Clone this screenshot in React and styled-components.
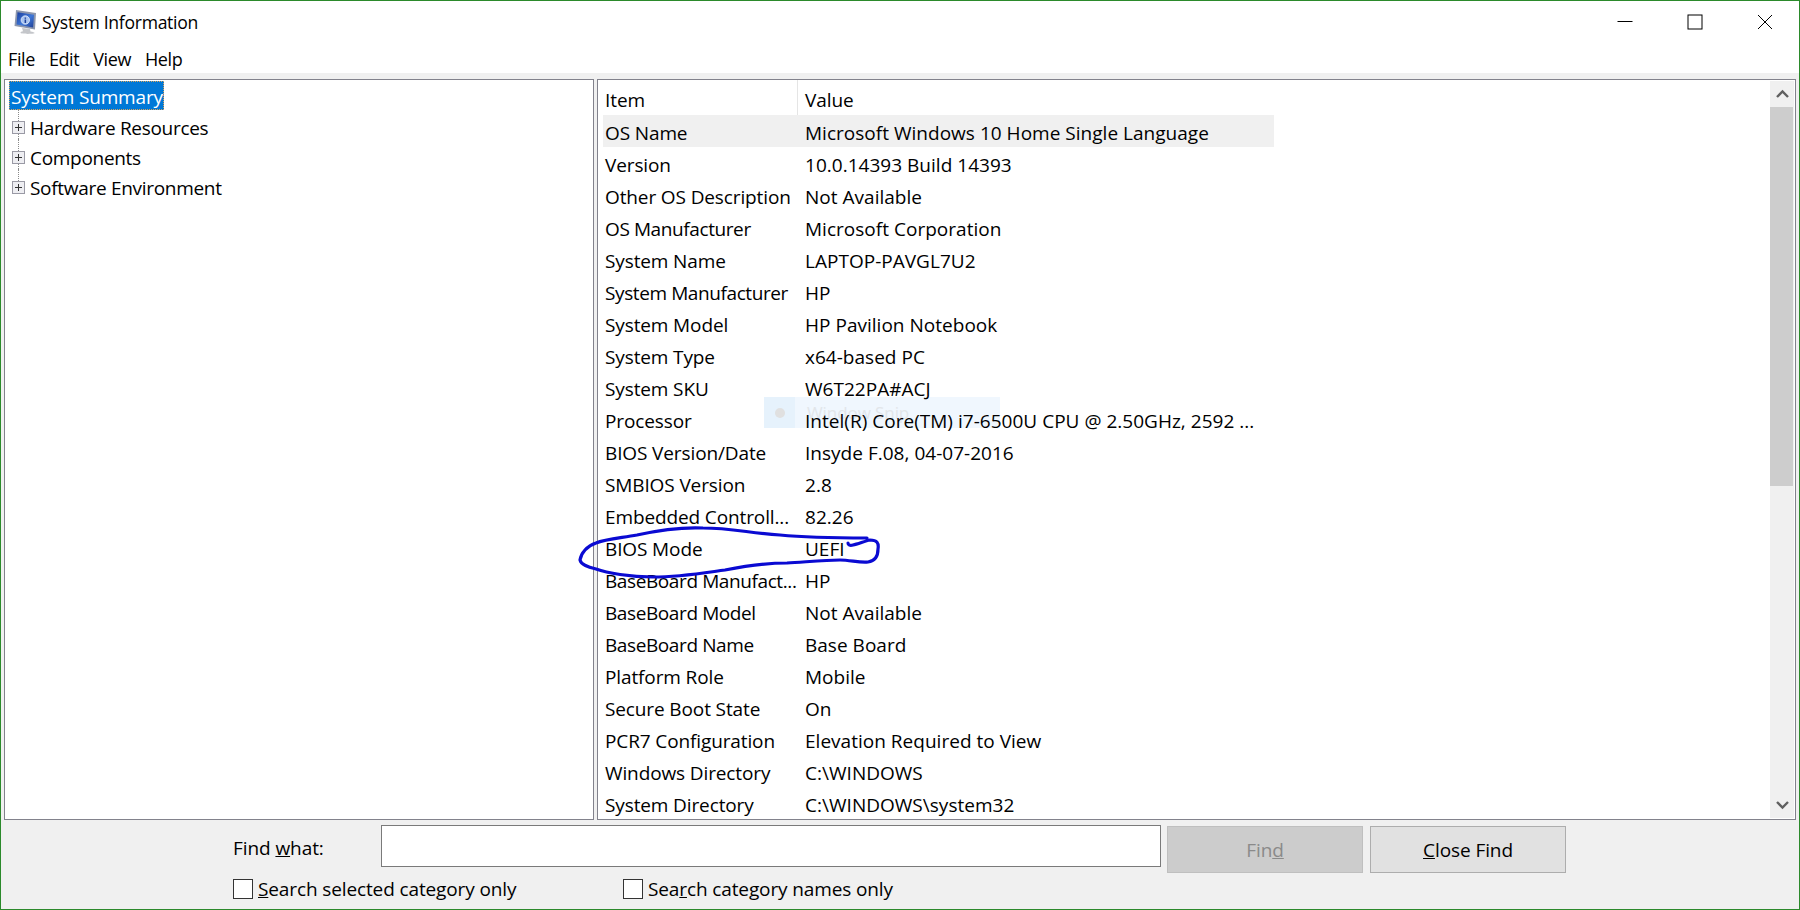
import React from 'react';
import styled, { createGlobalStyle } from 'styled-components';

const GlobalStyle = createGlobalStyle`
  html, body {
    margin: 0;
    padding: 0;
    background: #fff;
  }
  body {
    font-family: "Open Sans", "Noto Sans", sans-serif;
    color: #000;
  }
`;

const summary = [
  ['OS Name', 'Microsoft Windows 10 Home Single Language'],
  ['Version', '10.0.14393 Build 14393'],
  ['Other OS Description', 'Not Available'],
  ['OS Manufacturer', 'Microsoft Corporation'],
  ['System Name', 'LAPTOP-PAVGL7U2'],
  ['System Manufacturer', 'HP'],
  ['System Model', 'HP Pavilion Notebook'],
  ['System Type', 'x64-based PC'],
  ['System SKU', 'W6T22PA#ACJ'],
  ['Processor', 'Intel(R) Core(TM) i7-6500U CPU @ 2.50GHz, 2592 ...'],
  ['BIOS Version/Date', 'Insyde F.08, 04-07-2016'],
  ['SMBIOS Version', '2.8'],
  ['Embedded Controll...', '82.26'],
  ['BIOS Mode', 'UEFI'],
  ['BaseBoard Manufact...', 'HP'],
  ['BaseBoard Model', 'Not Available'],
  ['BaseBoard Name', 'Base Board'],
  ['Platform Role', 'Mobile'],
  ['Secure Boot State', 'On'],
  ['PCR7 Configuration', 'Elevation Required to View'],
  ['Windows Directory', 'C:\\WINDOWS'],
  ['System Directory', 'C:\\WINDOWS\\system32'],
];

const Window = styled.div`
  position: relative;
  box-sizing: border-box;
  width: 1800px;
  height: 910px;
  border: 1px solid #2b8a2b;
  background: #f0f0f0;
  display: flex;
  flex-direction: column;
  overflow: hidden;
  font-size: 19px;
  letter-spacing: -0.08px;
`;

const TitleBar = styled.div`
  height: 39px;
  flex: none;
  box-sizing: border-box;
  padding: 3px 0 0 12px;
  background: #fff;
  display: flex;
  align-items: center;
  gap: 5px;
`;

const TitleText = styled.span`
  font-size: 17.6px;
  letter-spacing: -0.3px;
  flex: 1;
`;

const WinButtons = styled.div`
  display: flex;
  gap: 54px;
  align-items: center;
  padding-right: 26px;
`;

const MenuBar = styled.div`
  height: 33px;
  flex: none;
  box-sizing: border-box;
  padding: 5px 0 0 7px;
  background: #fff;
  display: flex;
  align-items: center;
  gap: 14px;
  font-size: 18px;
  letter-spacing: -0.4px;
`;

const Panes = styled.div`
  height: 741px;
  flex: none;
  margin-top: 6px;
  padding: 0 3px;
  display: flex;
  gap: 3px;
`;

const TreePane = styled.div`
  width: 590px;
  flex: none;
  box-sizing: border-box;
  border: 1px solid #82828c;
  background: #fff;
  padding: 1px 4px;
`;

const TreeRow = styled.div`
  position: relative;
  height: 30px;
  display: flex;
  align-items: center;
  padding-left: 21px;
  letter-spacing: -0.3px;
  &::before {
    content: '';
    position: absolute;
    left: 9px;
    top: -4px;
    height: 34px;
    border-left: 1px dotted #8a8a8a;
  }
  &:last-child::before {
    height: 14px;
  }
`;

const SelectedRow = styled.div`
  display: inline-flex;
  align-items: center;
  height: 29px;
  box-sizing: border-box;
  padding: 2px 1px 0 2px;
  background: #0078d7;
  color: #fff;
  outline: 1px dotted #d9a35a;
  outline-offset: -1px;
  margin-bottom: 3px;
  letter-spacing: -0.15px;
`;

const Expander = styled.span`
  position: absolute;
  left: 3px;
  top: 8px;
  width: 13px;
  height: 13px;
  box-sizing: border-box;
  border: 1px solid #9a9aa5;
  background: #eeeef2;
  &::before,
  &::after {
    content: '';
    position: absolute;
    background: #333;
  }
  &::before {
    left: 2px;
    right: 2px;
    top: 5px;
    height: 1px;
  }
  &::after {
    top: 2px;
    bottom: 2px;
    left: 5px;
    width: 1px;
  }
`;

const ListPane = styled.div`
  position: relative;
  flex: 1;
  display: flex;
  box-sizing: border-box;
  border: 1px solid #82828c;
  background: #fff;
  overflow: hidden;
`;

const Table = styled.div`
  flex: 1;
  padding-left: 5px;
  overflow: hidden;
`;

const HeaderRow = styled.div`
  width: 671px;
  height: 35px;
  display: flex;
  align-items: center;
`;

const HeaderCell = styled.div`
  height: 100%;
  display: flex;
  align-items: center;
  box-sizing: border-box;
  width: ${(p) => p.$w}px;
  padding: 4px 0 0 ${(p) => p.$pad}px;
  border-right: ${(p) => (p.$divider ? '1px solid #e5e5e5' : 'none')};
`;

const Row = styled.div`
  position: relative;
  z-index: 1;
  width: 671px;
  height: 32px;
  box-sizing: border-box;
  padding-top: 4px;
  display: flex;
  align-items: center;
  white-space: nowrap;
  background: ${(p) => (p.$active ? '#f0f0f0' : 'transparent')};
`;

const ItemCell = styled.span`
  width: 200px;
  padding-left: 2px;
  box-sizing: border-box;
  flex: none;
  letter-spacing: ${(p) => (p.$tight ? '-0.4px' : '-0.12px')};
`;

const ValueCell = styled.span`
  padding-left: 2px;
  letter-spacing: 0.02px;
`;

const SnipToast = styled.div`
  position: absolute;
  left: 166px;
  top: 317px;
  width: 236px;
  height: 31px;
  display: flex;
  background: #f0f7fe;
  color: #e2e6ea;
  align-items: center;
  font-size: 17px;
`;

const SnipIcon = styled.span`
  width: 31px;
  height: 100%;
  background: #e6f2fc;
  display: flex;
  align-items: center;
  justify-content: center;
  margin-right: 12px;
  &::before {
    content: '';
    width: 10px;
    height: 10px;
    border-radius: 50%;
    background: #e0e0e0;
  }
`;

const Scrollbar = styled.div`
  width: 24px;
  flex: none;
  margin: 1px 1px 1px 0;
  background: #f0f0f0;
  display: flex;
  flex-direction: column;
`;

const ScrollButton = styled.div`
  height: 26px;
  display: flex;
  align-items: center;
  justify-content: center;
`;

const Thumb = styled.div`
  height: 379px;
  margin-right: 1px;
  background: #cdcdcd;
`;

const ScrollTrack = styled.div`
  flex: 1;
`;

const FindBar = styled.div`
  flex: 1;
  padding: 5px 0 0 232px;
  display: grid;
  grid-template-columns: 148px 780px 6px 196px 7px 196px;
  grid-template-rows: 42px auto;
  align-items: start;
`;

const FindLabel = styled.label`
  align-self: center;
  padding-top: 3px;
`;

const FindInput = styled.div`
  height: 42px;
  box-sizing: border-box;
  border: 1px solid #7a7a7a;
  background: #fff;
`;

const FindButton = styled.div`
  grid-column: ${(p) => p.$col};
  height: 47px;
  margin-top: 1px;
  box-sizing: border-box;
  border: 1px solid ${(p) => (p.$disabled ? '#bfbfbf' : '#adadad')};
  background: ${(p) => (p.$disabled ? '#cccccc' : '#e1e1e1')};
  color: ${(p) => (p.$disabled ? '#8a8a8a' : '#000')};
  display: flex;
  align-items: center;
  justify-content: center;
`;

const Options = styled.div`
  grid-column: 1 / -1;
  margin-top: 9px;
  display: flex;
  align-items: center;
`;

const CheckOption = styled.label`
  display: flex;
  align-items: center;
  gap: 5px;
  width: 390px;
  letter-spacing: -0.12px;
`;

const CheckBox = styled.span`
  width: 20px;
  height: 20px;
  box-sizing: border-box;
  border: 1px solid #333;
  background: #fff;
`;

const Scribble = styled.svg`
  position: absolute;
  left: -1px;
  top: -1px;
  z-index: 2;
  pointer-events: none;
`;

const AppIcon = () => (
  <svg width="24" height="26" viewBox="0 0 24 26">
    <defs>
      <linearGradient id="screen" x1="0" y1="0" x2="1" y2="1">
        <stop offset="0" stopColor="#1c3f9e" />
        <stop offset="0.55" stopColor="#3f78d8" />
        <stop offset="1" stopColor="#1f3f96" />
      </linearGradient>
    </defs>
    <path d="M9 19l8 1 .5 2.500c2.500.3 4 1 4 1.500 0 1.200-14 1.200-14-.2 0-.8 1-1.300 2.500-1.500z" fill="#c4c6ca" />
    <path d="M3 1l20 3-1 16.500L1.500 17z" fill="#8d97ad" />
    <path d="M4.500 3.200L21 5.700l-.9 12.800L3.500 15.600z" fill="url(#screen)" />
    <circle cx="12.300" cy="11" r="4.200" fill="#a9c4ef" stroke="#e4edfb" strokeWidth="0.800" />
    <path d="M11.600 8.400h1.500v1.300h-1.500zM11.600 10.500h1.500v3.500h-1.500z" fill="#1d3f9a" />
  </svg>
);

const MinimizeIcon = () => (
  <svg width="16" height="16" viewBox="0 0 16 16">
    <path d="M0.500 7.500h15" stroke="#000" fill="none" />
  </svg>
);

const MaximizeIcon = () => (
  <svg width="16" height="16" viewBox="0 0 16 16">
    <rect x="1" y="1" width="14" height="14" stroke="#000" fill="none" />
  </svg>
);

const CloseIcon = () => (
  <svg width="16" height="16" viewBox="0 0 16 16">
    <path d="M1 1l14 14M15 1L1 15" stroke="#000" fill="none" />
  </svg>
);

const Chevron = ({ down }) => (
  <svg width="13" height="10" viewBox="0 0 13 10">
    <path
      d={down ? 'M1 2l5.500 5.500L12 2' : 'M1 8l5.500-5.500L12 8'}
      stroke="#606060"
      strokeWidth="2.400"
      fill="none"
    />
  </svg>
);

const App = () => (
  <>
    <GlobalStyle />
    <Window>
      <TitleBar>
        <AppIcon />
        <TitleText>System Information</TitleText>
        <WinButtons>
          <MinimizeIcon />
          <MaximizeIcon />
          <CloseIcon />
        </WinButtons>
      </TitleBar>
      <MenuBar>
        <span>File</span>
        <span>Edit</span>
        <span>View</span>
        <span>Help</span>
      </MenuBar>
      <Panes>
        <TreePane>
          <SelectedRow>System Summary</SelectedRow>
          <TreeRow>
            <Expander />
            Hardware Resources
          </TreeRow>
          <TreeRow>
            <Expander />
            Components
          </TreeRow>
          <TreeRow>
            <Expander />
            Software Environment
          </TreeRow>
        </TreePane>
        <ListPane>
          <Table>
            <HeaderRow>
              <HeaderCell $w={195} $pad={2} $divider>
                Item
              </HeaderCell>
              <HeaderCell $w={476} $pad={7}>
                Value
              </HeaderCell>
            </HeaderRow>
            {summary.map(([item, value], i) => (
              <Row key={item} $active={i === 0}>
                <ItemCell $tight={/Manufact|BaseBoard/.test(item)}>{item}</ItemCell>
                <ValueCell>{value}</ValueCell>
              </Row>
            ))}
          </Table>
          <SnipToast>
            <SnipIcon />
            Window Snip
          </SnipToast>
          <Scrollbar>
            <ScrollButton>
              <Chevron />
            </ScrollButton>
            <Thumb />
            <ScrollTrack />
            <ScrollButton>
              <Chevron down />
            </ScrollButton>
          </Scrollbar>
        </ListPane>
      </Panes>
      <FindBar>
        <FindLabel>
          Find <u>w</u>hat:
        </FindLabel>
        <FindInput />
        <FindButton $col={4} $disabled>
          <span>
            Fin<u>d</u>
          </span>
        </FindButton>
        <FindButton $col={6}>
          <span>
            <u>C</u>lose Find
          </span>
        </FindButton>
        <Options>
          <CheckOption>
            <CheckBox />
            <span>
              <u>S</u>earch selected category only
            </span>
          </CheckOption>
          <CheckOption>
            <CheckBox />
            <span>
              Sea<u>r</u>ch category names only
            </span>
          </CheckOption>
        </Options>
      </FindBar>
      <Scribble width="1800" height="910" viewBox="0 0 1800 910">
        <path
          d="M867 538C840 538 810 538 780 535C750 533 730 528 703 528C680 527 655 531 637 535C620 538 605 539 596 543C587 546 581 553 580 560C581 565 588 567 596 569C607 573 630 577 653 577C680 577 703 573 725 570C745 566 765 563 787 563C805 562 825 560 840 560C850 560 860 563 868 562C875 561 878 556 878 549C879 543 877 540 870 540C865 541 858 544 853 545C850 546 848 545 848 543"
          stroke="#0a0ad2"
          strokeWidth="3.200"
          strokeLinecap="round"
          fill="none"
        />
      </Scribble>
    </Window>
  </>
);

export default App;
